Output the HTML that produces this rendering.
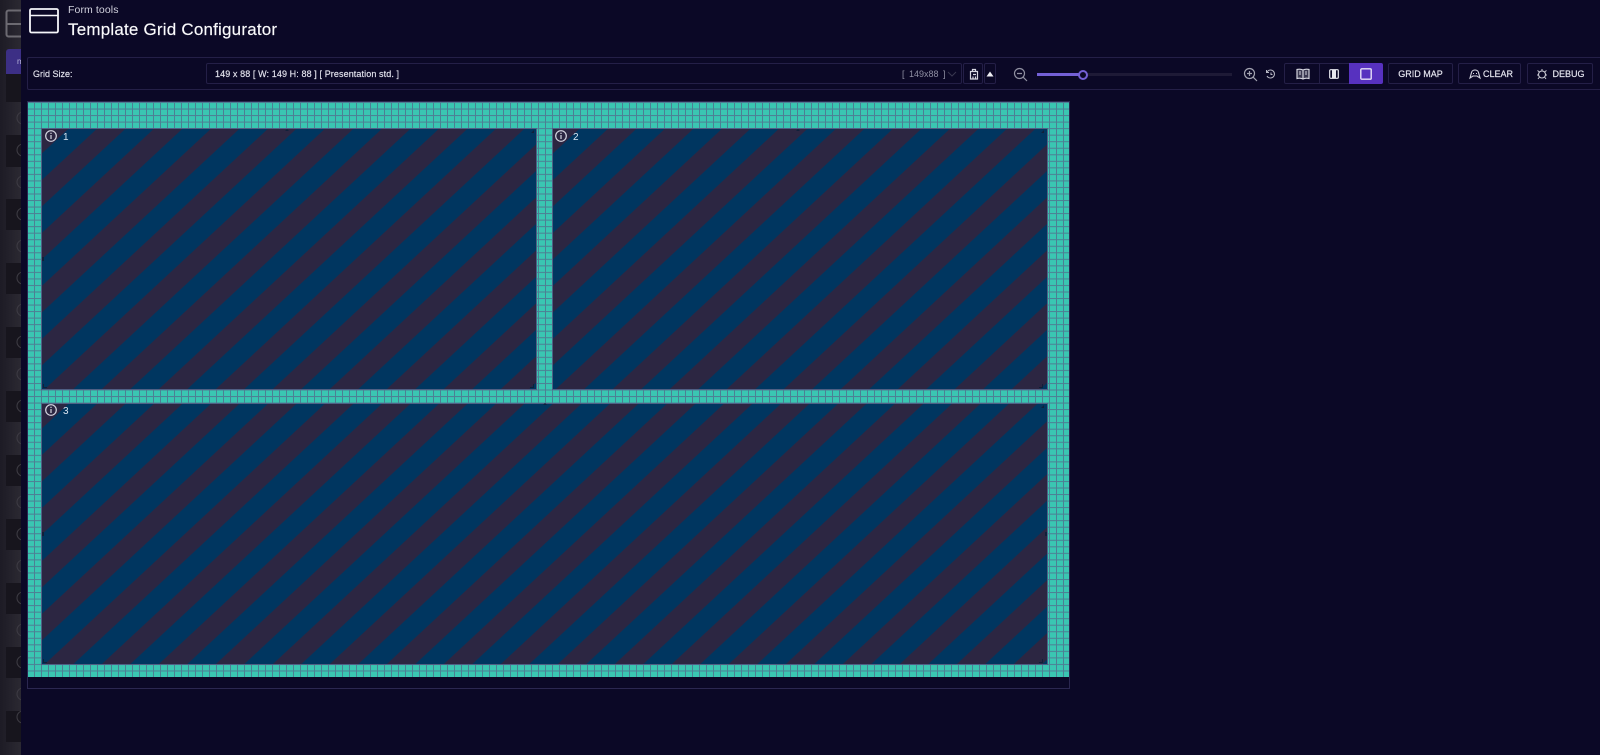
<!DOCTYPE html>
<html>
<head>
<meta charset="utf-8">
<style>
html,body{margin:0;padding:0;width:1600px;height:755px;overflow:hidden;background:#0b0826;font-family:"Liberation Sans","Noto Sans CJK SC",sans-serif;color:#e8e8f0}
#w{position:absolute;left:0;top:0;width:1600px;height:755px;filter:blur(.35px);overflow:hidden}
.a{position:absolute;box-sizing:border-box}
.t{position:absolute;white-space:nowrap;line-height:1}
.b{position:absolute;box-sizing:border-box;top:63px;height:21px;border:1px solid #241f47;border-radius:2px;background:#0b0826;font-size:9px;color:#e8e8f2;display:flex;align-items:center;justify-content:center;-webkit-text-stroke:.15px #e8e8f2}
svg{position:absolute;overflow:visible}
</style>
</head>
<body>
<div id="w">
<!-- sidebar -->
<div class="a" style="left:0;top:0;width:21px;height:755px;background:linear-gradient(90deg,#1d1b25,#2b2932)"></div>
<div class="a" style="left:6px;top:49px;width:15px;height:25px;background:#3c2f85;border-radius:3px 0 0 0"><span class="t" style="left:11px;top:9px;font-size:8px;color:#b9b4da">m</span></div>
<div class="a" style="left:6px;top:74px;width:15px;height:28px;background:#17151d"></div>
<div class="a" style="left:6px;top:135px;width:15px;height:32px;background:#17151d"></div>
<div class="a" style="left:6px;top:199px;width:15px;height:31px;background:#17151d"></div>
<div class="a" style="left:6px;top:263px;width:15px;height:31px;background:#17151d"></div>
<div class="a" style="left:6px;top:327px;width:15px;height:31px;background:#17151d"></div>
<div class="a" style="left:6px;top:391px;width:15px;height:31px;background:#17151d"></div>
<div class="a" style="left:6px;top:455px;width:15px;height:31px;background:#17151d"></div>
<div class="a" style="left:6px;top:519px;width:15px;height:31px;background:#17151d"></div>
<div class="a" style="left:6px;top:583px;width:15px;height:31px;background:#17151d"></div>
<div class="a" style="left:6px;top:647px;width:15px;height:31px;background:#17151d"></div>
<div class="a" style="left:6px;top:711px;width:15px;height:31px;background:#17151d"></div>
<svg width="21" height="755" style="left:0;top:0">
  <rect x="6.500" y="10.500" width="20" height="26" rx="2" fill="none" stroke="#6c6a71" stroke-width="2"/>
  <line x1="6" y1="24" x2="21" y2="24" stroke="#6c6a71" stroke-width="2"/>
  <g fill="none" stroke="#3d3b43" stroke-width="1.100">
    <circle cx="23" cy="118" r="6"/><circle cx="23" cy="150" r="6"/><circle cx="23" cy="182" r="6"/><circle cx="23" cy="214" r="6"/>
    <circle cx="23" cy="246" r="6"/><circle cx="23" cy="278" r="6"/><circle cx="23" cy="310" r="6"/><circle cx="23" cy="342" r="6"/>
    <circle cx="23" cy="374" r="6"/><circle cx="23" cy="406" r="6"/><circle cx="23" cy="438" r="6"/><circle cx="23" cy="470" r="6"/>
    <circle cx="23" cy="502" r="6"/><circle cx="23" cy="534" r="6"/><circle cx="23" cy="566" r="6"/><circle cx="23" cy="598" r="6"/>
    <circle cx="23" cy="630" r="6"/><circle cx="23" cy="662" r="6"/><circle cx="23" cy="694" r="6"/><circle cx="23" cy="717" r="6"/>
  </g>
</svg>
<div class="a" style="left:21px;top:0;width:1579px;height:755px;background:#0b0826"></div>

<!-- header -->
<svg width="32" height="28" style="left:28px;top:7px">
  <rect x="2" y="2" width="28" height="23.500" rx="1.500" fill="none" stroke="#f6f6fa" stroke-width="1.800"/>
  <line x1="2" y1="8.500" x2="30" y2="8.500" stroke="#f6f6fa" stroke-width="1.600"/>
</svg>
<div class="t" style="left:68px;top:5px;font-size:10.500px;color:#d2d2de;letter-spacing:.1px">Form tools</div>
<div class="t" style="left:68px;top:21px;font-size:17px;color:#fafafc;letter-spacing:.2px;-webkit-text-stroke:.15px #fafafc">Template Grid Configurator</div>

<!-- toolbar -->
<div class="a" style="left:27px;top:57px;width:1573px;height:33px;border:1px solid #241f47;border-right:0;border-radius:2px 0 0 2px"></div>
<div class="t" style="left:33px;top:70px;font-size:9px;color:#e4e4ee;-webkit-text-stroke:.15px #e4e4ee">Grid Size:</div>
<div class="a" style="left:206px;top:63px;width:756px;height:21px;border:1px solid #241f47;border-radius:2px"></div>
<div class="t" style="left:215px;top:70px;font-size:9px;color:#e4e4ee;letter-spacing:.1px;-webkit-text-stroke:.15px #e4e4ee">149 x 88 [ W: 149 H: 88 ] [ Presentation std. ]</div>
<div class="t" style="left:902px;top:70px;font-size:9px;color:#8f8fa3;word-spacing:2px">[ 149x88 ]</div>
<svg width="10" height="6" style="left:947px;top:71px"><path d="M1 1L5 5L9 1" fill="none" stroke="#3a3750" stroke-width="1"/></svg>
<div class="b" style="left:963px;width:20px"></div>
<svg width="12" height="12" style="left:968px;top:68px"><path d="M2.500 3.500H9.500V11H2.500Z M4.500 3.500V1.500H7.500V3.500 M5 6.500H8 M5 8.500V11 M7.500 8.500V11" fill="none" stroke="#d8d8e2" stroke-width="1.200"/></svg>
<div class="b" style="left:984px;width:12px"></div>
<svg width="8" height="6" style="left:986px;top:71px"><path d="M4 0.500L7.500 5.500H0.500Z" fill="#f0f0f5"/></svg>

<!-- zoom & slider -->
<svg width="16" height="16" style="left:1013px;top:67px"><circle cx="6.500" cy="6.500" r="5" fill="none" stroke="#8f8fa0" stroke-width="1.200"/><path d="M4 6.500H9 M10.300 10.300L14 14" stroke="#8f8fa0" stroke-width="1.200"/></svg>
<div class="a" style="left:1037px;top:73px;width:195px;height:3px;background:#1e1a36"></div>
<div class="a" style="left:1037px;top:73px;width:45px;height:3px;background:#7460d6"></div>
<div class="a" style="left:1078px;top:69.500px;width:10px;height:10px;border-radius:50%;border:2px solid #7460d6;background:#0b0826"></div>
<svg width="16" height="16" style="left:1243px;top:67px"><circle cx="6.500" cy="6.500" r="5" fill="none" stroke="#a2a2b0" stroke-width="1.200"/><path d="M4 6.500H9 M6.500 4V9 M10.300 10.300L14 14" stroke="#a2a2b0" stroke-width="1.200"/></svg>
<svg width="12" height="12" style="left:1265px;top:68px"><path d="M2 4A4 4 0 1 1 2 8 M1.500 2V4.500H4 M6 4.500V6.500H7.500" fill="none" stroke="#b8b8c4" stroke-width="1"/></svg>

<!-- buttons -->
<div class="b" style="left:1284px;width:36px;border-radius:2px 0 0 2px"></div>
<svg width="14" height="12" style="left:1296px;top:68px"><path d="M7 2C5 1 3 1 1 1.500V10.500C3 10 5 10 7 11C9 10 11 10 13 10.500V1.500C11 1 9 1 7 2V11" fill="#3a3850" stroke="#d4d4de" stroke-width="1.200"/><path d="M3 4H5 M3 6H5 M9 4H11 M9 6H11" stroke="#d4d4de"/></svg>
<div class="b" style="left:1319px;width:31px;border-radius:0"></div>
<svg width="10" height="10" style="left:1329px;top:69px"><rect x=".7" y=".7" width="8.600" height="8.600" rx="1" fill="none" stroke="#e8e8ee" stroke-width="1.200"/><rect x="3" y="1" width="4" height="8" fill="#e8e8ee"/></svg>
<div class="b" style="left:1349px;width:34px;background:#5731bf;border-color:#5731bf;border-radius:0 2px 2px 0"></div>
<svg width="12" height="12" style="left:1360px;top:68px"><rect x=".8" y=".8" width="10.400" height="10.400" rx="1" fill="none" stroke="#e6e0f8" stroke-width="1.400"/></svg>
<div class="b" style="left:1388px;width:65px">GRID MAP</div>
<div class="b" style="left:1458px;width:63px;padding-left:17px">CLEAR</div>
<svg width="12" height="10" style="left:1469px;top:69px"><path d="M1 9L2.500 3.500C3 1.500 5 1 6 1C7 1 9 1.500 9.500 3.500L11 9L8 7H4Z M4 4.500H5 M7 4.500H8" fill="none" stroke="#d4d4de" stroke-width="1.100"/></svg>
<div class="b" style="left:1527px;width:66px;padding-left:17px">DEBUG</div>
<svg width="12" height="12" style="left:1536px;top:68px"><circle cx="6" cy="6.500" r="3.500" fill="none" stroke="#c8c8d2" stroke-width="1.100"/><path d="M6 1V3 M1.500 2.500L3.500 4 M10.500 2.500L8.500 4 M1 7H2.500 M11 7H9.500 M2 11L3.500 9 M10 11L8.500 9" stroke="#c8c8d2"/></svg>

<!-- grid -->
<div class="a" style="left:27px;top:101px;width:1043px;height:588px;border:1px solid #2b2750"></div>
<svg width="1600" height="755" style="left:0;top:0">
  <defs>
    <pattern id="cell" x="27" y="102" width="7" height="6.534" patternUnits="userSpaceOnUse">
      <rect width="7" height="6.534" fill="#3ac6b2"/>
      <rect x="0" width="1" height="6.534" fill="#4d7f94"/>
      <rect y="0" width="7" height="1" fill="#4d7f94"/>
    </pattern>
    <pattern id="st1" width="38.800" height="100" patternUnits="userSpaceOnUse" patternTransform="translate(96.700,129) rotate(47.100)">
      <rect width="38.800" height="100" fill="#003660"/>
      <rect x="0" width="19.400" height="100" fill="#2c2642"/>
    </pattern>
    <pattern id="st2" width="38.800" height="100" patternUnits="userSpaceOnUse" patternTransform="translate(607.700,129) rotate(47.100)">
      <rect width="38.800" height="100" fill="#003660"/>
      <rect x="0" width="19.400" height="100" fill="#2c2642"/>
    </pattern>
    <pattern id="st3" width="38.800" height="100" patternUnits="userSpaceOnUse" patternTransform="translate(96.700,404) rotate(47.100)">
      <rect width="38.800" height="100" fill="#003660"/>
      <rect x="0" width="19.400" height="100" fill="#2c2642"/>
    </pattern>
  </defs>
  <rect x="28" y="102" width="1041" height="575" fill="url(#cell)"/>
  <g stroke="#4f5f84" stroke-width="1">
    <rect x="41.500" y="128.500" width="495" height="261" fill="url(#st1)"/>
    <rect x="552.500" y="128.500" width="495" height="261" fill="url(#st2)"/>
    <rect x="41.500" y="403.500" width="1006" height="261" fill="url(#st3)"/>
  </g>
  <g fill="#10203a">
    <path d="M287 129l2 2h-4Z M798 129l2 2h-4Z M1044 130v3h-3Z M534 130v3h-3Z M1044 405v3h-3Z M545 403l2 2h-4Z"/>
    <path d="M43 384v4h4v-1h-3v-3Z M1043 384v4h-4v-1h3v-3Z M534 384v4h-4v-1h3v-3Z M43 659v4h4v-1h-3v-3Z M1043 659v4h-4v-1h3v-3Z"/>
    <rect x="42" y="257" width="2" height="4"/><rect x="42" y="532" width="2" height="4"/><rect x="1045" y="532" width="2" height="4"/>
  </g>
  <g fill="none" stroke="#d6d6e2" stroke-width="1.200">
    <circle cx="51" cy="136" r="5.300"/><circle cx="561" cy="136" r="5.300"/><circle cx="51" cy="410" r="5.300"/>
  </g>
  <g stroke="#d6d6e2" stroke-width="1.200">
    <path d="M51 135V139 M51 132.800V134"/><path d="M561 135V139 M561 132.800V134"/><path d="M51 409V413 M51 406.800V408"/>
  </g>
  <g font-family="Liberation Sans, sans-serif" font-size="10" fill="#d8e4f0">
    <text x="63" y="140">1</text><text x="573" y="140">2</text><text x="63" y="414">3</text>
  </g>
</svg>
</div>
</body>
</html>
